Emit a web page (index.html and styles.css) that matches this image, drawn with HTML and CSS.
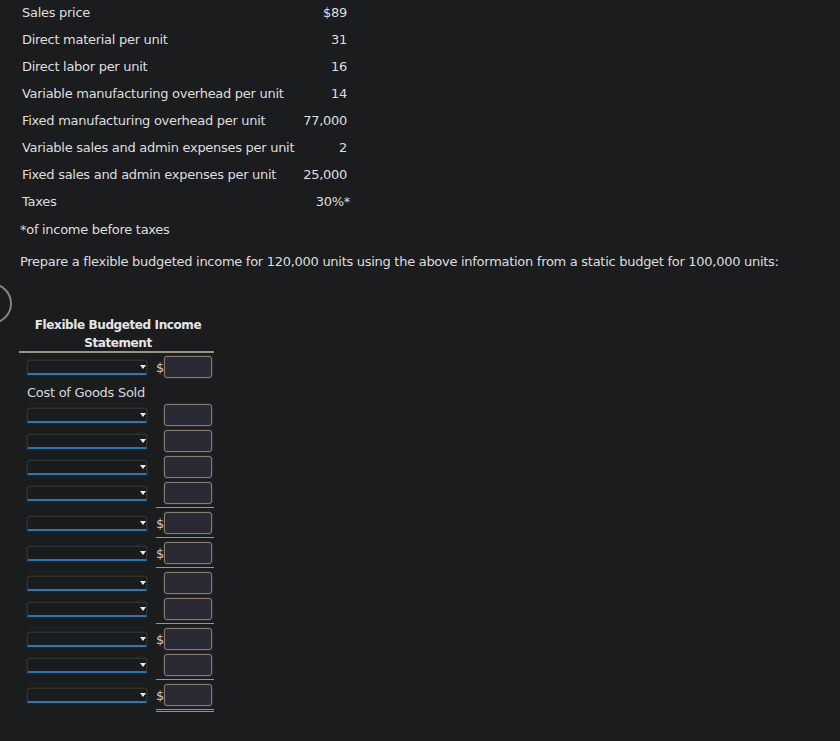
FILE: index.html
```html
<!DOCTYPE html>
<html>
<head>
<meta charset="utf-8">
<link rel="stylesheet" href="styles.css">
</head>
<body>
<div class="ring"></div>
<div class="data">
  <div class="lbl">Sales price</div><div class="val">$89</div>
  <div class="lbl">Direct material per unit</div><div class="val">31</div>
  <div class="lbl">Direct labor per unit</div><div class="val">16</div>
  <div class="lbl">Variable manufacturing overhead per unit</div><div class="val">14</div>
  <div class="lbl">Fixed manufacturing overhead per unit</div><div class="val">77,000</div>
  <div class="lbl">Variable sales and admin expenses per unit</div><div class="val">2</div>
  <div class="lbl">Fixed sales and admin expenses per unit</div><div class="val">25,000</div>
  <div class="lbl">Taxes</div><div class="val">30%<span class="star">*</span></div>
</div>
<p class="note">*of income before taxes</p>
<p class="prompt">Prepare a flexible budgeted income for 120,000 units using the above information from a static budget for 100,000 units:</p>

<div class="stmt">
  <div class="title">Flexible Budgeted Income<br>Statement</div>

  <div class="row first"><div class="dd"></div><div class="amt"><span class="cur">$</span><span class="box"></span></div></div>
  <div class="row label">Cost of Goods Sold</div>
  <div class="row"><div class="dd"></div><div class="amt"><span class="cur"></span><span class="box"></span></div></div>
  <div class="row"><div class="dd"></div><div class="amt"><span class="cur"></span><span class="box"></span></div></div>
  <div class="row"><div class="dd"></div><div class="amt"><span class="cur"></span><span class="box"></span></div></div>
  <div class="row"><div class="dd"></div><div class="amt ul"><span class="cur"></span><span class="box"></span></div></div>
  <div class="row"><div class="dd"></div><div class="amt ul"><span class="cur">$</span><span class="box"></span></div></div>
  <div class="row"><div class="dd"></div><div class="amt ul"><span class="cur">$</span><span class="box"></span></div></div>
  <div class="row"><div class="dd"></div><div class="amt"><span class="cur"></span><span class="box"></span></div></div>
  <div class="row"><div class="dd"></div><div class="amt ul"><span class="cur"></span><span class="box"></span></div></div>
  <div class="row"><div class="dd"></div><div class="amt"><span class="cur">$</span><span class="box"></span></div></div>
  <div class="row"><div class="dd"></div><div class="amt ul"><span class="cur"></span><span class="box"></span></div></div>
  <div class="row"><div class="dd"></div><div class="amt dbl"><span class="cur">$</span><span class="box"></span></div></div>
</div>
</body>
</html>
```

FILE: styles.css
```css
html, body {
  margin: 0;
  padding: 0;
  background: #1b1c1e;
}
body {
  position: relative;
  min-height: 741px;
  padding: 0 20px;
  font-family: "DejaVu Sans", Verdana, sans-serif;
  font-size: 13px;
  letter-spacing: -0.28px;
  color: #dedede;
  overflow: hidden;
}
.ring {
  position: absolute;
  left: -29px;
  top: 283px;
  width: 37px;
  height: 37px;
  border: 2px solid #8a8376;
  border-radius: 50%;
}
.data {
  display: grid;
  grid-template-columns: minmax(0, 1fr) auto;
  width: 325px;
  margin-left: 2px;
}
.data > div {
  line-height: 16px;
  padding: 5px 0 6px;
  white-space: nowrap;
}
.val {
  text-align: right;
}
.star {
  margin-right: -3px;
}
.note {
  margin: 6px 0 0;
  line-height: 16px;
}
.prompt {
  margin: 16px 0 0;
  line-height: 16px;
}
.stmt {
  width: 195px;
  margin: 45px 0 0 -1px;
}
.title {
  font-weight: bold;
  font-size: 12px;
  letter-spacing: -0.4px;
  line-height: 18px;
  text-align: center;
  color: #e6e6e6;
  padding: 1px 0 0 3px;
  height: 35px;
  border-bottom: 2px solid #9a9384;
}
.row {
  display: flex;
  align-items: flex-start;
  padding-left: 8px;
}
.row.first {
  margin-top: 1px;
}
.row.label {
  box-sizing: border-box;
  height: 22px;
  padding-top: 3px;
  line-height: 19px;
  color: #d8d8d8;
}
.dd {
  position: relative;
  box-sizing: border-box;
  width: 120px;
  height: 15px;
  margin-top: 6px;
  background: #1a1b1d;
  border: 1px solid #303133;
  border-bottom: 2px solid #2a77b6;
  border-radius: 3px 3px 0 0;
  box-shadow: 0 0 2px rgba(120,120,120,0.35);
}
.dd::after {
  content: "";
  position: absolute;
  right: 0;
  top: 4px;
  border-left: 3.5px solid transparent;
  border-right: 3.5px solid transparent;
  border-top: 4px solid #ececec;
}
.amt {
  display: flex;
  align-items: center;
  margin-left: 9px;
  padding: 2px 2px 2px 0;
  width: 56px;
}
.amt.ul {
  padding-bottom: 3px;
  border-bottom: 1px solid #9a9588;
  margin-bottom: 2px;
}
.amt.dbl {
  padding-bottom: 3px;
  border-bottom: 3px double #9a9588;
}
.cur {
  width: 8px;
  font-size: 13px;
  color: #c9c9c9;
  text-align: left;
}
.box {
  box-sizing: border-box;
  width: 48px;
  height: 22px;
  background: #2b2934;
  border: 1px solid #857f73;
  border-radius: 3px;
  box-shadow: 0 0 2px rgba(200,190,170,0.35);
}
```
